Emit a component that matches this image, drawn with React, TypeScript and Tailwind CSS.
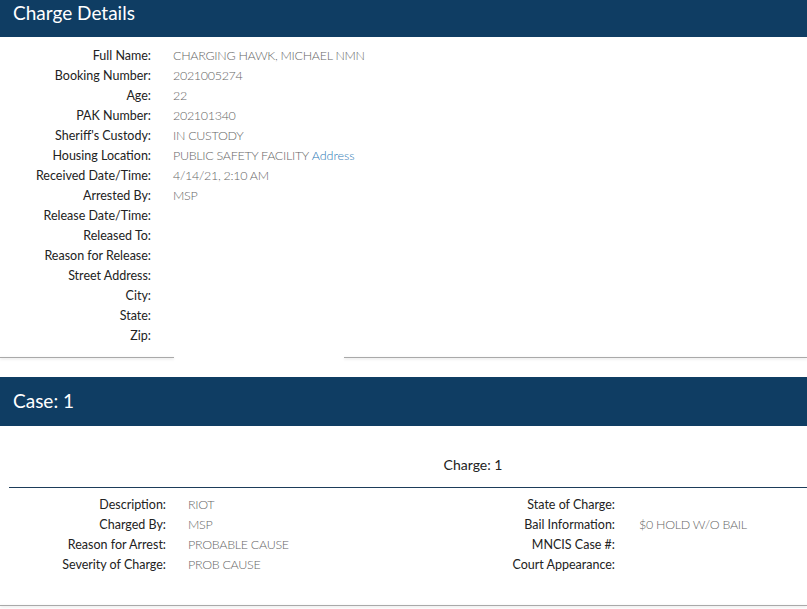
import React from 'react';

const booking: [string, React.ReactNode][] = [
  ['Full Name:', 'CHARGING HAWK, MICHAEL NMN'],
  ['Booking Number:', '2021005274'],
  ['Age:', '22'],
  ['PAK Number:', '202101340'],
  ["Sheriff's Custody:", 'IN CUSTODY'],
  [
    'Housing Location:',
    <>
      PUBLIC SAFETY FACILITY <a className="text-[#2a78b5] tracking-normal">Address</a>
    </>,
  ],
  ['Received Date/Time:', '4/14/21, 2:10 AM'],
  ['Arrested By:', 'MSP'],
  ['Release Date/Time:', ''],
  ['Released To:', ''],
  ['Reason for Release:', ''],
  ['Street Address:', ''],
  ['City:', ''],
  ['State:', ''],
  ['Zip:', ''],
];

const chargeLeft = [
  ['Description:', 'RIOT'],
  ['Charged By:', 'MSP'],
  ['Reason for Arrest:', 'PROBABLE CAUSE'],
  ['Severity of Charge:', 'PROB CAUSE'],
];

const chargeRight = [
  ['State of Charge:', ''],
  ['Bail Information:', '$0 HOLD W/O BAIL'],
  ['MNCIS Case #:', ''],
  ['Court Appearance:', ''],
];

function ShadowLine({ className = '' }: { className?: string }) {
  return <div className={`h-px bg-[#a9a9a9] shadow-[0_1px_3px_rgba(0,0,0,0.18)] ${className}`} />;
}

export default function App() {
  return (
    <div className="w-[807px] h-[609px] overflow-hidden bg-white font-['Lato',sans-serif] text-[12.5px]">
      {/* Charge details header */}
      <div className="h-[37px] bg-[#0f3d63] px-[13px] pt-[1px] text-white text-[19px] leading-[24px]">Charge Details</div>

      <div className="pt-[9px] pb-[11px]">
        {booking.map(([label, value], i) => (
          <div key={i} className="flex h-[20px] items-center">
            <div className="w-[151px] text-right text-[#222]">{label}</div>
            <div className="pl-[22px] tracking-[-0.3px] text-[#666] font-light">{value}</div>
          </div>
        ))}
      </div>
      <div className="flex">
        <ShadowLine className="w-[174px]" />
        <div className="w-[170px]" />
        <ShadowLine className="flex-1" />
      </div>

      {/* Case header */}
      <div className="mt-[19px] h-[49px] bg-[#0f3d63] px-[13px] flex items-center text-white text-[19px]">Case: 1</div>

      <div className="pl-[9px]">
        <div className="h-[61px] flex items-end justify-center pl-[130px] pb-[12px] text-[14px] text-[#222]">Charge: 1</div>
        <div className="h-px bg-[#1d3d5a]" />
      </div>

      <div className="flex pt-[7px] pb-[30px]">
        <div className="w-[404px]">
          {chargeLeft.map(([label, value]) => (
            <div key={label} className="flex h-[20px] items-center">
              <div className="w-[166px] text-right text-[#222]">{label}</div>
              <div className="pl-[22px] tracking-[-0.3px] text-[#666] font-light">{value}</div>
            </div>
          ))}
        </div>
        <div className="flex-1">
          {chargeRight.map(([label, value]) => (
            <div key={label} className="flex h-[20px] items-center">
              <div className="w-[211px] text-right text-[#222]">{label}</div>
              <div className="pl-[24px] tracking-[-0.3px] text-[#666] font-light">{value}</div>
            </div>
          ))}
        </div>
      </div>
      <ShadowLine />
    </div>
  );
}
